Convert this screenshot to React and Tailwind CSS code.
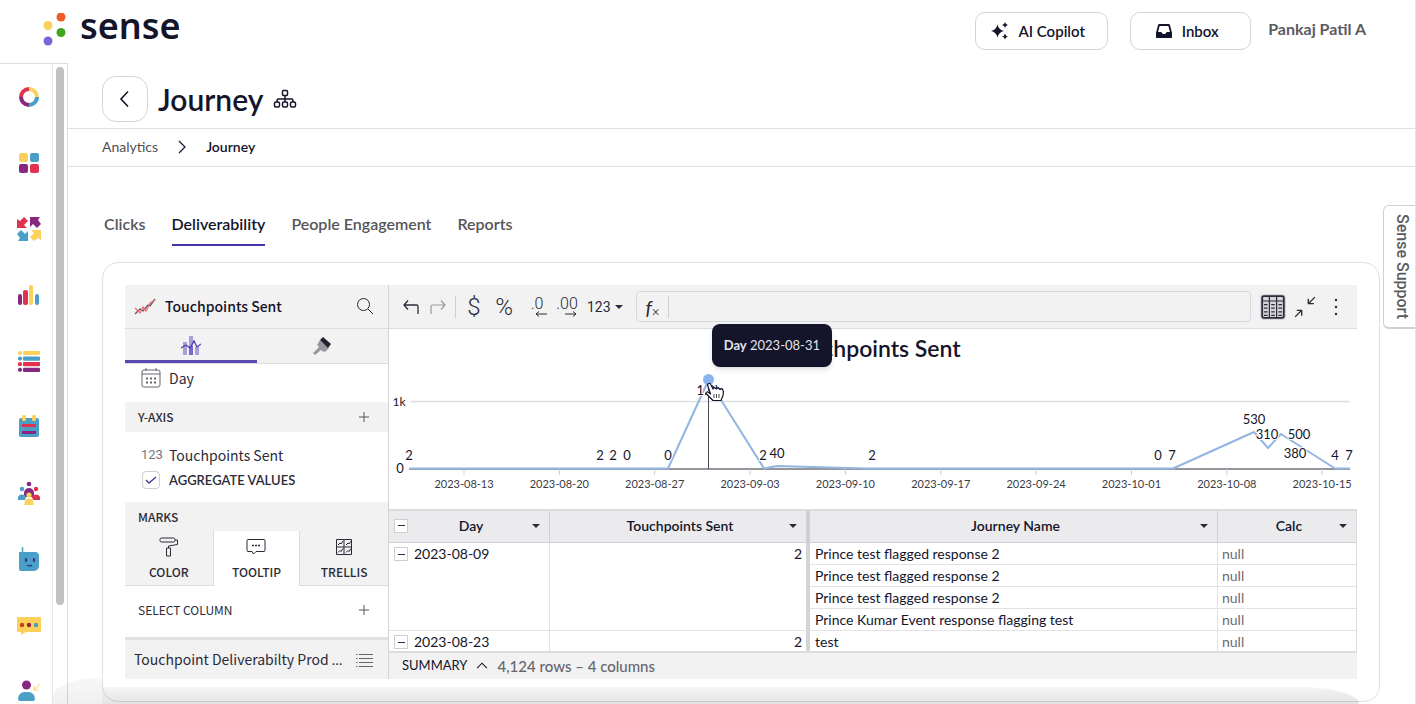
import React, { useState } from 'react';

const TABS = ['Clicks', 'Deliverability', 'People Engagement', 'Reports'];

const TICKS = [
  '2023-08-13', '2023-08-20', '2023-08-27', '2023-09-03', '2023-09-10',
  '2023-09-17', '2023-09-24', '2023-10-01', '2023-10-08', '2023-10-15',
];

// value labels drawn above the line: [x, baseline, text]
const POINT_LABELS = [
  [20, 131, '2'], [211, 131, '2'], [224, 131, '2'], [238, 131, '0'], [279, 131, '0'],
  [374, 131, '2'], [388, 129, '40'], [483, 131, '2'], [769, 131, '0'], [783, 131, '7'],
  [865, 95, '530'], [878, 110, '310'], [910, 110, '500'], [906, 129, '380'],
  [946, 131, '4'], [960, 131, '7'],
];

const ROWS = [
  { day: '2023-08-09', sent: 2, span: 4, name: 'Prince test flagged response 2' },
  { name: 'Prince test flagged response 2' },
  { name: 'Prince test flagged response 2' },
  { name: 'Prince Kumar Event response flagging test' },
  { day: '2023-08-23', sent: 2, span: 1, name: 'test' },
];

const RED = '#e0314f';
const PURPLE = '#86287f';
const YELLOW = '#fbd15b';
const BLUE = '#4a9fc6';

const NAV = [
  {
    label: 'Home',
    art: (
      <g fill="none" strokeWidth="4">
        <path d="M12 4a8 8 0 0 0-8 8" stroke={RED} />
        <path d="M12 4a8 8 0 0 1 8 8" stroke={YELLOW} />
        <path d="M20 12a8 8 0 0 1-8 8" stroke={BLUE} />
        <path d="M12 20a8 8 0 0 1-8-8" stroke={PURPLE} />
      </g>
    ),
  },
  {
    label: 'Apps',
    art: (
      <>
        <rect x="2" y="2" width="9" height="9" rx="2" fill={YELLOW} />
        <rect x="13" y="2" width="9" height="9" rx="2" fill={BLUE} />
        <rect x="2" y="13" width="9" height="9" rx="2" fill={PURPLE} />
        <rect x="13" y="13" width="9" height="9" rx="2" fill={RED} />
      </>
    ),
  },
  {
    label: 'Journeys',
    art: (
      <>
        <path d="M0 11V2l3 2 4-4 4 4-4 4 3 3z" fill={RED} />
        <path d="M13 0h10l-2 3 3 4-4 4-4-4-3 3z" fill={PURPLE} />
        <path d="M11 24H1l2-3-3-4 4-4 4 4 3-3z" fill={BLUE} />
        <path d="M24 13v10l-3-2-4 3-4-4 4-4-3-3z" fill={YELLOW} />
      </>
    ),
  },
  {
    label: 'Analytics',
    art: (
      <>
        <rect x="1" y="11" width="4" height="11" rx="2" fill={PURPLE} />
        <rect x="6" y="7" width="5" height="15" rx="2" fill={RED} />
        <rect x="12" y="2" width="4" height="20" rx="2" fill={YELLOW} />
        <rect x="18" y="11" width="4" height="11" rx="2" fill={BLUE} />
      </>
    ),
  },
  {
    label: 'Lists',
    art: [YELLOW, BLUE, RED, PURPLE].map((c, i) => (
      <g key={c} fill={c}>
        <circle cx="3" cy={4 + i * 5.6} r="2.1" />
        <rect x="6" y={1.9 + i * 5.6} width="17" height="4.2" rx="1" />
      </g>
    )),
  },
  {
    label: 'Surveys',
    art: (
      <>
        <rect x="2" y="3" width="20" height="19" rx="2" fill={BLUE} />
        <rect x="5" y="0" width="4" height="6" rx="1.5" fill={YELLOW} />
        <rect x="15" y="0" width="4" height="6" rx="1.5" fill={YELLOW} />
        <rect x="5" y="9" width="14" height="3" fill={RED} />
        <rect x="5" y="16" width="14" height="3" fill={PURPLE} />
      </>
    ),
  },
  {
    label: 'People',
    art: (
      <>
        <circle cx="5" cy="8" r="2.2" fill={BLUE} />
        <circle cx="19" cy="8" r="2.2" fill={RED} />
        <circle cx="12" cy="3" r="2.3" fill={PURPLE} />
        <path d="M7 14V12a5 5 0 0 1 10 0v4H7z" fill={PURPLE} />
        <path d="M1 19v-3a4.5 4.5 0 0 1 8 0l-1 3z" fill={BLUE} />
        <path d="M23 19v-3a4.5 4.5 0 0 0-8 0l1 3z" fill={RED} />
        <circle cx="12" cy="14" r="2.6" fill={YELLOW} />
        <path d="M7.500 24v-2a4.500 4.500 0 0 1 9 0v2z" fill={YELLOW} />
      </>
    ),
  },
  {
    label: 'Bot',
    art: (
      <>
        <path d="M5.500 0v6" stroke={BLUE} strokeWidth="1.500" />
        <path d="M2 5h16a4 4 0 0 1 4 4v10a5 5 0 0 1-5 5H4a2 2 0 0 1-2-2z" fill={BLUE} />
        <ellipse cx="9" cy="13" rx="1.300" ry="2" fill="#3a3190" />
        <ellipse cx="17" cy="13" rx="1.300" ry="2" fill="#3a3190" />
        <path d="M10 18q3 2 5 0" fill="none" stroke="#3a3190" strokeWidth="1.300" />
      </>
    ),
  },
  {
    label: 'Messages',
    art: (
      <>
        <path d="M1 4h22a1 1 0 0 1 1 1v13a1 1 0 0 1-1 1H9l-5 3v-3H1a1 1 0 0 1-1-1V5a1 1 0 0 1 1-1z" fill={YELLOW} />
        <circle cx="5" cy="12" r="2.200" fill="#c2410c" />
        <circle cx="12" cy="12" r="2.200" fill="#9b2340" />
        <circle cx="19" cy="12" r="2.200" fill={BLUE} />
      </>
    ),
  },
  {
    label: 'Referrals',
    art: (
      <>
        <circle cx="9.500" cy="6" r="4.500" fill={PURPLE} />
        <path d="M1 20a7 7 0 0 1 6-7h5a7 7 0 0 1 6 7q0 2-2 2H3q-2 0-2-2z" fill={BLUE} />
        <path d="M23 5l-6 6m0-4v4h4" fill="none" stroke={YELLOW} />
      </>
    ),
  },
];

function Line({ d, size = 20, width = 1, className = '', children }) {
  return (
    <svg width={size} height={size} viewBox="0 0 20 20" fill="none" stroke="currentColor" strokeWidth={width} className={className} aria-hidden="true">
      {d && <path d={d} />}
      {children}
    </svg>
  );
}

function Caret({ className = '' }) {
  return (
    <svg width="8" height="4" viewBox="0 0 8 4" className={className} aria-hidden="true">
      <path d="M0 0h8L4 4z" fill="#2b2b38" />
    </svg>
  );
}

function Header() {
  return (
    <header className="flex h-[63px] flex-shrink-0 items-start justify-between pl-[43px] pr-[49px]">
      <a href="#home" className="flex items-center gap-[14px] pt-[5px]">
        <svg width="23" height="34" viewBox="0 0 23 34" className="mt-2" aria-hidden="true">
          <circle cx="18" cy="4" r="4.500" fill="#f15a29" />
          <circle cx="5" cy="12.500" r="4.500" fill="#f9d15f" />
          <circle cx="18" cy="19.500" r="4.500" fill="#3fa51c" />
          <circle cx="5" cy="28" r="4.500" fill="#7b68d8" />
        </svg>
        <span className="font-['Noto_Sans'] text-4xl leading-10 font-semibold text-[#14142b]">sense</span>
      </a>
      <div className="flex items-center pt-3 text-[15px] font-semibold">
        <button className="mr-[22px] flex h-[38px] w-[133px] items-center justify-center gap-[9px] rounded-[10px] border border-[#d4d4d6] pr-[7px]">
          <svg width="18" height="18" viewBox="0 0 18 18" fill="#14142b" aria-hidden="true">
            <path d="M6.500 2.500q1.200 5.300 6.500 6.500-5.300 1.200-6.500 6.500Q5.300 10.200 0 9q5.300-1.200 6.500-6.500z" />
            <path d="M14 0q.500 2.500 3 3-2.500.500-3 3-.500-2.500-3-3 2.500-.500 3-3zM14 11.500q.500 2.500 3 3-2.500.500-3 3-.500-2.500-3-3 2.500-.500 3-3z" />
          </svg>
          AI Copilot
        </button>
        <button className="mr-[17px] flex h-[38px] w-[121px] items-center justify-center gap-[10px] rounded-[10px] border border-[#d4d4d6] pr-[7px]">
          <svg width="16" height="16" viewBox="0 0 16 16" fill="none" stroke="#14142b" strokeWidth="1.800" aria-hidden="true">
            <path d="M3 2h10l2 7.500V14H1V9.500z" strokeLinejoin="round" />
            <path d="M1 10h4l1.500 2h3L11 10h4v4H1z" fill="#14142b" strokeLinejoin="round" />
          </svg>
          Inbox
        </button>
        <span className="pb-1 text-base font-bold text-[#5b5b5f]">Pankaj Patil A</span>
      </div>
    </header>
  );
}

function Sidebar() {
  return (
    <aside className="flex w-[68px] flex-shrink-0 overflow-hidden border-t border-r border-[#dcdcdc]">
      <nav className="flex w-[53px] flex-col border-r border-[#e6e6e6] pl-[5px]">
        {NAV.map(item => (
          <a key={item.label} href="#nav" aria-label={item.label} className="flex h-[66px] flex-shrink-0 items-center justify-center">
            <svg width="24" height="24" viewBox="0 0 24 24" aria-hidden="true">{item.art}</svg>
          </a>
        ))}
      </nav>
      <div className="flex flex-1 justify-center pt-[3px] pb-[99px]">
        <div className="w-2 rounded-full bg-[#c1c1c1]" />
      </div>
    </aside>
  );
}

function ConfigPanel() {
  const [aggregate, setAggregate] = useState(true);

  return (
    <section className="flex w-[264px] flex-shrink-0 flex-col border-r border-[#d4d4d6] font-['Noto_Sans_CJK_SC',sans-serif] text-[#2b2b38]">
      <div className="flex h-11 items-center border-b border-[#dcdcde] bg-[#f2f2f2] pr-[13px] pl-[9px]">
        <svg width="22" height="18" viewBox="0 0 22 18" fill="none" aria-hidden="true">
          <path d="M1 16l5-5 3 2 5-6 2 1 5-7" stroke="#555566" strokeWidth="1.300" />
          <path d="M1 10l5 5 3-6 3 4 4-8 5-3" stroke="#ef6a6a" strokeWidth="1.300" />
        </svg>
        <h2 className="ml-[9px] pb-px text-sm leading-5 font-medium text-[#14142b]">Touchpoints Sent</h2>
        <button aria-label="Search" className="ml-auto pb-[2px]"><Line><circle cx="8.500" cy="8.500" r="6" /><path d="M13 13L18 18" /></Line></button>
      </div>
      <div className="grid h-[35px] grid-cols-2 border-b border-[#dcdcde] bg-[#f2f2f2]">
        <button aria-label="Chart data" className="flex items-center justify-center border-b-3 border-[#5a48b0]">
          <svg width="20" height="20" viewBox="0 0 20 20" aria-hidden="true">
            <path d="M2 7h4v13H2zM8 1h4v19H8zM14 12h4v8h-4z" fill="#a9a0d8" />
            <path d="M8 11h4v9H8z" fill="#7a66d0" />
            <path d="M0 13l5-3 4 3 4-7 3 6 4-3" fill="none" stroke="#5443b0" strokeWidth="1.300" />
          </svg>
        </button>
        <button aria-label="Chart format" className="flex items-center justify-center">
          <svg width="20" height="20" viewBox="0 0 20 20" aria-hidden="true">
            <path d="M8 4l9 8-4 4-3-1-1-1-6 5-2-2 6-6-2-2z" fill="#98989e" />
            <path d="M11 1l8 7-3 4-8-8z" fill="#23232e" />
          </svg>
        </button>
      </div>
      <div className="flex h-[38px] items-center gap-2 pb-[10px] pl-4 text-sm leading-5">
        <Line className="text-[#66666f]">
          <rect x="1" y="2" width="18" height="17" rx="2" />
          <path d="M1 6h18M5 0v3M15 0v3" />
          <path d="M5 10.500h10M5 14.500h10" strokeWidth="2" strokeDasharray="2 2" />
        </Line>
        <span>Day</span>
      </div>
      <div className="flex h-[30px] items-center justify-between bg-[#f2f2f2] pr-[14px] pl-[13px] text-xs leading-5 font-medium">
        Y-AXIS
        <button aria-label="Add to Y-axis"><Line d="M5 10h10M10 5v10" className="text-[#55555e]" /></button>
      </div>
      <div className="flex h-[70px] flex-col pt-3 pl-4">
        <div className="flex h-[22px] items-center gap-[7px] text-sm leading-5">
          <span className="w-[21px] font-[Roboto] text-[13px] text-[#77777f]">123</span>
          <span>Touchpoints Sent</span>
        </div>
        <label className="flex h-7 items-center gap-2 font-[Lato] text-[13px] leading-5 font-semibold">
          <span className="relative flex h-5 w-5 items-center justify-center">
            <input
              type="checkbox"
              checked={aggregate}
              onChange={e => setAggregate(e.target.checked)}
              className="h-[18px] w-[18px] appearance-none rounded-sm border border-[#cfcfd3] bg-white"
            />
            {aggregate && <Line d="M5 10l3 3 7-6" width={1.3} className="pointer-events-none absolute inset-0 text-[#43379c]" />}
          </span>
          AGGREGATE VALUES
        </label>
      </div>
      <div className="bg-[#f2f2f2]">
        <h3 className="h-[29px] pt-[5px] pl-[13px] text-xs leading-5 font-medium">MARKS</h3>
        <div className="grid h-[55px] grid-cols-3 text-xs leading-5 font-medium">
          <button className="flex flex-col items-center gap-[5px] border-b border-[#dcdcde] pt-[6px]">
            <Line><rect x="1" y="1" width="15" height="4" rx="1.500" /><path d="M16 3h2.500v4.500l-9 1.500v2M7.500 11h4v8h-4z" /></Line>
            COLOR
          </button>
          <button className="flex flex-col items-center gap-[5px] border-x border-[#dcdcde] bg-white pt-[6px]">
            <Line><path d="M2 2.500h16a1 1 0 0 1 1 1v10a1 1 0 0 1-1 1h-8L7.500 17 6 14.500H2a1 1 0 0 1-1-1v-10a1 1 0 0 1 1-1z" /><path d="M6 8.500h8" strokeWidth="1.500" strokeDasharray="2 1" /></Line>
            TOOLTIP
          </button>
          <button className="flex flex-col items-center gap-[5px] border-b border-[#dcdcde] pt-[6px]">
            <Line><path d="M2.500 2.500h15v15h-15zM10 2.500v15M2.500 10h15" /><path d="M4 8l2-2 1 1 2-3M12 8l2-2 1 1 2-3M4 15.500l2-2 1 1 2-3M12 15.500l2-2 1 1 2-3" /></Line>
            TRELLIS
          </button>
        </div>
      </div>
      <div className="flex flex-1 items-center justify-between pr-[14px] pb-[3px] pl-[13px] text-xs leading-5">
        SELECT COLUMN
        <button aria-label="Add column"><Line d="M5 10h10M10 5v10" className="text-[#55555e]" /></button>
      </div>
      <div className="flex h-[42px] items-center justify-between gap-2 border-t-3 border-[#e2e2e4] bg-[#f2f2f2] pr-[14px] pl-[9px] text-sm leading-5">
        <span className="whitespace-nowrap">Touchpoint Deliverabilty Prod <span className="font-[Lato]">…</span></span>
        <button aria-label="Columns"><Line d="M5 4.500h14M5 8.500h14M5 12.500h14M5 16.500h14M2 4.500h1.500M2 8.500h1.500M2 12.500h1.500M2 16.500h1.500" className="text-[#66666f]" /></button>
      </div>
    </section>
  );
}

function Toolbar() {
  return (
    <div className="flex h-11 items-center border-b border-[#dcdcde] bg-[#f2f2f2] pl-2 font-[Roboto] font-light text-[#2b2b38]">
      <button aria-label="Undo" className="flex w-[27px] justify-center"><Line d="M7 3.500L3 8l4 4.500M3 8h12.500q1.500 0 1.500 1.500V17" width={1.3} /></button>
      <button aria-label="Redo" className="flex w-[27px] justify-center text-[#9a9aa0]"><Line d="M13 3.500L17 8l-4 4.500M17 8H4.500Q3 8 3 9.500V17" width={1.2} /></button>
      <div className="mr-[3px] ml-1 h-[22px] w-px bg-[#cfcfd3]" />
      <button className="w-[30px] text-2xl leading-7">$</button>
      <button className="mr-[3px] w-[30px] text-2xl leading-7">%</button>
      <button aria-label="Fewer decimals" className="flex w-[30px] flex-col items-center text-base leading-[14px]">
        .0
        <svg width="12" height="6" viewBox="0 0 12 6" className="ml-2" fill="none" stroke="currentColor"><path d="M12 3H1M4 .500L1 3l3 2.500" /></svg>
      </button>
      <button aria-label="More decimals" className="flex w-[30px] flex-col items-center text-base leading-[14px]">
        .00
        <svg width="12" height="6" viewBox="0 0 12 6" className="ml-2" fill="none" stroke="currentColor"><path d="M0 3h11M8 .500L11 3 8 5.500" /></svg>
      </button>
      <div className="relative ml-[5px] flex w-9 items-center">
        <select aria-label="Number format" className="w-full appearance-none bg-transparent text-sm font-normal">
          <option>123</option>
        </select>
        <Caret className="pointer-events-none absolute right-0" />
      </div>
      <label className="ml-[13px] flex h-[31px] flex-1 items-center rounded-sm border border-[#d9d9dc] text-xl">
        <span className="flex h-[22px] w-8 items-center justify-center border-r border-[#cfcfd3] leading-5">
          <i className="font-[Lato] font-normal">f</i><small className="mt-2 text-sm">×</small>
        </span>
        <input type="text" aria-label="Formula" className="h-full min-w-0 flex-1 bg-transparent px-2 text-sm outline-none" />
      </label>
      <button aria-label="Table view" className="ml-[9px] flex h-[26px] w-[26px] items-center justify-center rounded-sm bg-[#d5d5da]">
        <Line size={24} width={1}>
          <rect x="1" y="1" width="18" height="18" rx="1.500" strokeWidth="1.500" />
          <path d="M1 5h18M7 1v18M13 1v18" />
          <path d="M2.500 8h3M2.500 11h3M2.500 14h3M2.500 17h3M8.500 8h3M8.500 11h3M8.500 14h3M8.500 17h3M14.500 8h3M14.500 11h3M14.500 14h3M14.500 17h3" />
        </Line>
      </button>
      <button aria-label="Minimize" className="ml-[8px] flex w-[22px] justify-center">
        <Line size={22} width={1.2} d="M19 1l-6 6M13 2.500V7h5M1 19l6-6M2.500 13H7v5" />
      </button>
      <button aria-label="More" className="mr-[11px] ml-[10px] flex w-5 justify-center">
        <svg width="4" height="18" viewBox="0 0 4 18" fill="#2b2b38"><circle cx="2" cy="2" r="1.200" /><circle cx="2" cy="9" r="1.200" /><circle cx="2" cy="16" r="1.200" /></svg>
      </button>
    </div>
  );
}

function Chart() {
  return (
    <div className="relative">
      <h2 className="absolute inset-x-0 top-1 text-center text-[23px] leading-[30px] font-semibold text-[#14142b]">Touchpoints Sent</h2>
      <svg viewBox="0 0 968 180" className="block w-full font-[Lato]" role="img" aria-label="Touchpoints sent by day">
        <path d="M21 72.500h940" stroke="#dfdfe1" strokeWidth="1.500" />
        <path d="M20 140h941" stroke="#2b2b38" />
        {TICKS.map((t, i) => (
          <g key={t}>
            <path d={`M${75 + i * 95.35} 140v6`} stroke="#c5cfe2" />
            <text x={75 + i * 95.35} y="159" textAnchor="middle" fontSize="11" fill="#3b3b46">{t}</text>
          </g>
        ))}
        <path d="M319.500 60v80" stroke="#4a4a55" />
        <path
          d="M20 139.500H279L319.500 51L375 139.500L388 137L477 139.500H784L865 103L879 119L892 105L946 139.500H961"
          fill="none" stroke="#93b5e3" strokeWidth="2" strokeLinejoin="round"
        />
        <g fontSize="13" fill="#14142b" textAnchor="middle" stroke="#fff" strokeWidth="2" paintOrder="stroke">
          <text x="10" y="77" fontSize="12">1k</text>
          <text x="11" y="144">0</text>
          <text x="320" y="66">1.3k</text>
          {POINT_LABELS.map(([x, y, text]) => <text key={x} x={x} y={y}>{text}</text>)}
        </g>
        <circle cx="319.500" cy="50.500" r="5.500" fill="#8ab4f0" />
        {/* pointer */}
        <path
          d="M319 55q2-1.500 3 1l2 4 1-1.500 2.500 1.500 1.500-1.500 2 2 2-1 1.500 3-.500 4-2 5h-8l-7-7q0-2 2-1.500l2.500 2-3-9z"
          fill="#fff" stroke="#14142b" strokeWidth="1.200" strokeLinejoin="round"
        />
        <path d="M325 65v4M327.500 65v4M330 65v4" stroke="#14142b" strokeWidth=".800" />
      </svg>
      <div role="tooltip" className="absolute top-[-5px] left-1/3 flex h-[43px] items-center rounded-lg bg-[#14142b] px-3 text-[13px] whitespace-nowrap text-[#e4e4ea] shadow-md">
        <span><b>Day</b> 2023-08-31</span>
      </div>
    </div>
  );
}

function Collapse() {
  return (
    <button aria-label="Collapse" className="flex h-[14px] w-[14px] flex-shrink-0 items-center justify-center border border-[#cfcfd3] bg-white">
      <span className="h-px w-[7px] bg-[#2b2b38]" />
    </button>
  );
}

function HeadCell({ children, collapse, className = '' }) {
  return (
    <th className={`border-b border-[#d0d0d4] px-[5px] pb-[2px] font-semibold ${className}`}>
      <div className="flex items-center">
        <span className="w-4">{collapse && <Collapse />}</span>
        <span className="flex-1 text-center">{children}</span>
        <Caret className="mr-1" />
      </div>
    </th>
  );
}

function DataTable() {
  return (
    <div className="h-[142px] overflow-hidden border-t-2 border-[#dcdcde]">
      <table className="w-full table-fixed border-separate border-spacing-0 border-r border-[#dcdcde] text-sm leading-5 text-[#14142b]">
        <colgroup>
          <col className="w-[161px]" />
          <col className="w-[260px]" />
          <col />
          <col className="w-[138px]" />
        </colgroup>
        <thead className="bg-[#ebebed]">
          <tr className="h-8">
            <HeadCell collapse className="border-r">Day</HeadCell>
            <HeadCell className="border-r-4">Touchpoints Sent</HeadCell>
            <HeadCell className="border-r">Journey Name</HeadCell>
            <HeadCell>Calc</HeadCell>
          </tr>
        </thead>
        <tbody>
          {ROWS.map((row, i) => (
            <tr key={i} className="h-[22px]">
              {row.day && (
                <>
                  <td rowSpan={row.span} className="border-r border-b border-[#e2e2e4] px-[5px] pt-px align-top">
                    <div className="flex items-center gap-[6px]"><Collapse />{row.day}</div>
                  </td>
                  <td rowSpan={row.span} className="border-r-4 border-b border-r-[#d4d4d8] border-b-[#e2e2e4] pt-px pr-1 text-right align-top">{row.sent}</td>
                </>
              )}
              <td className="border-r border-b border-[#e2e2e4] pt-px pl-[5px]">{row.name}</td>
              <td className="border-b border-[#e2e2e4] pt-px pl-1 text-[#6b6b73]">null</td>
            </tr>
          ))}
        </tbody>
      </table>
    </div>
  );
}

export default function App() {
  return (
    <div className="relative flex h-screen flex-col overflow-hidden border-r border-[#e2e2e2] bg-white font-[Lato,sans-serif] text-[#14142b]">
      <Header />
      <div className="flex min-h-0 flex-1">
        <Sidebar />
        <main className="min-w-0 flex-1">
          <div className="flex h-[66px] items-center border-b border-[#e0e0e0] pt-[6px] pl-[34px]">
            <button aria-label="Back" className="flex h-[46px] w-[46px] items-center justify-center rounded-[14px] border border-[#d4d4d6]">
              <Line d="M13 2.500L6 10l7 7.500" width={1.6} />
            </button>
            <h1 className="ml-[10px] text-[30px] leading-8 font-semibold">Journey</h1>
            <svg width="24" height="20" viewBox="0 0 24 20" className="ml-[10px]" fill="none" stroke="#14142b" strokeWidth="1.500" aria-hidden="true">
              <rect x="9.500" y="1.500" width="5" height="5" rx="1" />
              <rect x="1.500" y="13" width="5" height="5" rx="1.500" />
              <rect x="9.500" y="13" width="5" height="5" rx="1.500" />
              <rect x="17.500" y="13" width="5" height="5" rx="1.500" />
              <path d="M12 6.500V13M4 13v-1.500q0-1.500 1.500-1.500h13q1.500 0 1.500 1.500V13" />
            </svg>
          </div>
          <nav aria-label="Breadcrumb" className="flex h-[38px] items-center border-b border-[#e0e0e0] pb-[2px] pl-[34px] text-sm">
            <a href="#analytics" className="text-[#4f4f55]">Analytics</a>
            <Line d="M7 4l6 6-6 6" width={1.2} className="mx-[14px]" />
            <a href="#journey" className="font-semibold">Journey</a>
          </nav>
          <div className="mt-11 flex gap-[26px] pl-9 text-base leading-[26px] font-semibold">
            {TABS.map(tab => (
              <button
                key={tab}
                className={tab === 'Deliverability' ? 'border-b-2 border-[#4335a5] pb-[7px]' : 'border-b-2 border-transparent pb-[7px] text-[#55555b]'}
              >
                {tab}
              </button>
            ))}
          </div>
          <div className="mt-4 mr-[35px] ml-[34px] rounded-2xl border border-[#e0e0e2] p-[22px]">
            <div className="flex">
              <ConfigPanel />
              <section className="min-w-0 flex-1">
                <Toolbar />
                <Chart />
                <DataTable />
                <div className="flex h-7 items-center gap-2 border-t-2 border-[#dcdcde] bg-[#f2f2f2] pl-[13px] text-[13px]">
                  <span>SUMMARY</span>
                  <Line size={14} d="M3 13l7-7 7 7" width={1.5} />
                  <span className="text-[15px] font-medium text-[#66666e]">4,124 rows – 4 columns</span>
                </div>
              </section>
            </div>
          </div>
        </main>
      </div>

      {/* haze rising from the bottom edge */}
      <div className="pointer-events-none absolute bottom-0 left-[53px] h-[26px] w-[49px] rounded-tl-[50px_18px] bg-linear-to-b from-black/3 to-black/6" />
      <div className="pointer-events-none absolute right-[56px] bottom-0 left-[102px] h-[17px] rounded-tr-[60px_17px] bg-linear-to-b from-black/4 to-black/11" />

      <button className="absolute top-[205px] right-0 flex h-[124px] w-8 items-center justify-center rounded-l-md border border-r-0 border-b-2 border-[#d0d0d0] bg-white pl-1 font-[Roboto] text-base font-medium text-[#5b5b5f] [writing-mode:vertical-rl]">
        Sense Support
      </button>
    </div>
  );
}
